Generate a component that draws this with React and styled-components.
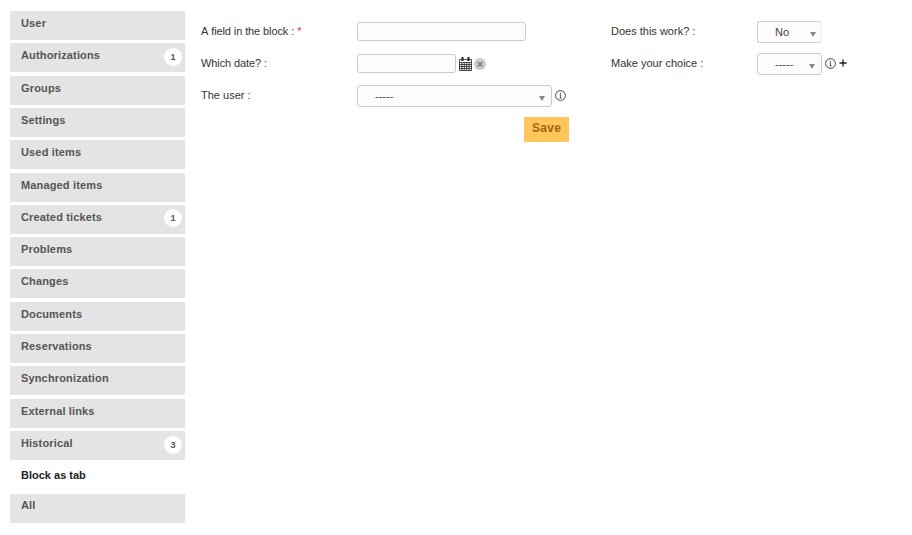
import React from "react";
import styled, { createGlobalStyle } from "styled-components";

const GlobalStyle = createGlobalStyle`
  html, body {
    margin: 0;
    padding: 0;
    background: #fff;
    font-family: "Liberation Sans", Arial, sans-serif;
    font-size: 11px;
    color: #333;
    font-kerning: none;
  }
`;

const Page = styled.div`
  width: 912px;
  height: 535px;
  display: flex;
  overflow: hidden;
`;
const Tabs = styled.ul`
  width: 175px;
  margin: 10.99px 0 0 10px;
  padding: 0;
  list-style: none;
  flex: none;
`;
const Tab = styled.li`
  position: relative;
  height: ${(p) => (p.$active ? "30.64px" : "29px")};
  margin-bottom: ${(p) => (p.$active ? "0" : "3.3125px")};
  padding: ${(p) => (p.$compact ? "5px" : "6px")} 11px 0;
  box-sizing: border-box;
  background: ${(p) => (p.$active ? "#fff" : "#e4e4e4")};
  color: ${(p) => (p.$active ? "#222" : "#555")};
  font-weight: bold;
  font-size: 11px;
  line-height: 13px;
  letter-spacing: ${(p) => (p.$active ? "0" : "0.15px")};
`;
const Badge = styled.span`
  position: absolute;
  top: 4.5px;
  right: 3px;
  width: 18px;
  height: 18px;
  border-radius: 50%;
  background: #fff;
  color: #555;
  font-size: 9px;
  line-height: 18px;
  text-align: center;
  letter-spacing: 0;
`;
const Content = styled.div`
  flex: 1;
  display: flex;
  padding-left: 16px;
`;
const LeftBlock = styled.div`
  width: 368px;
  padding-top: 22px;
`;
const RightBlock = styled.div`
  margin-left: 42px;
  padding-top: 21px;
`;
const Row = styled.div`
  display: flex;
  align-items: flex-start;
  height: ${(p) => p.$height || 32}px;
`;
const Label = styled.label`
  width: ${(p) => p.$width || 156}px;
  margin-top: ${(p) => p.$offset || 3}px;
  flex: none;
  font-size: 11px;
  line-height: 13px;
  color: #333;
  letter-spacing: ${(p) => (p.$tight ? "-0.1px" : "0")};
`;
const Required = styled.span`
  color: #e22;
`;
const TextInput = styled.div`
  width: ${(p) => p.$width}px;
  height: 19px;
  box-sizing: border-box;
  border: 1px solid #ccc;
  border-radius: 3px;
  background: #fcfcfc;
`;
const Select = styled.div`
  position: relative;
  width: ${(p) => p.$width}px;
  height: 22px;
  box-sizing: border-box;
  border: 1px solid #ccc;
  border-right-color: ${(p) => (p.$openEdge ? "#eee" : "#ccc")};
  border-radius: 3px;
  background: #fcfcfc;
  color: #444;
  font-size: 11px;
  line-height: 21px;
  padding-left: 17px;
`;
const Arrow = styled.span`
  position: absolute;
  right: ${(p) => p.$right || 6}px;
  top: 10px;
  width: 0;
  height: 0;
  border-left: 3.5px solid transparent;
  border-right: 3.5px solid transparent;
  border-top: 5px solid #888;
`;
const IconBox = styled.svg`
  flex: none;
  margin-left: ${(p) => p.$gap || 3}px;
  margin-top: ${(p) => p.$top || 0}px;
  display: block;
`;
const Clear = styled.span`
  width: 12px;
  height: 12px;
  margin: 4px 0 0 2px;
  border-radius: 50%;
  background: #ccc;
  color: #777;
  font-size: 11px;
  font-weight: bold;
  line-height: 12px;
  text-align: center;
  flex: none;
`;
const Actions = styled.div`
  display: flex;
  justify-content: flex-end;
`;
const SaveButton = styled.button`
  width: 45px;
  height: 25px;
  padding: 0 0 3px;
  border: none;
  background: #ffc75b;
  color: #a2650f;
  font-family: "Liberation Sans", Arial, sans-serif;
  font-size: 12px;
  font-weight: bold;
  letter-spacing: 0.3px;
`;

const tabs = [
  { name: "User" },
  { name: "Authorizations", badge: 1 },
  { name: "Groups" },
  { name: "Settings" },
  { name: "Used items" },
  { name: "Managed items" },
  { name: "Created tickets", badge: 1 },
  { name: "Problems" },
  { name: "Changes" },
  { name: "Documents" },
  { name: "Reservations" },
  { name: "Synchronization" },
  { name: "External links" },
  { name: "Historical", badge: 3 },
  { name: "Block as tab", active: true },
  { name: "All", compact: true },
];

const InfoIcon = ({ top }) => (
  <IconBox width="11" height="11" viewBox="0 0 11 11" $gap={3} $top={top}>
    <circle cx="5.5" cy="5.5" r="4.9" fill="none" stroke="#333" strokeWidth="0.9" />
    <rect x="5" y="2.6" width="1" height="1" fill="#333" />
    <path d="M4.6 4.7H5.5V7.9M4.5 8H6.6" fill="none" stroke="#333" strokeWidth="0.8" />
  </IconBox>
);

const CalendarIcon = () => (
  <IconBox width="13" height="14" viewBox="0 0 13 14" $gap={3} $top={3}>
    <path
      d="M0.5 2.5H12.5V13.5H0.5ZM0.5 5.5H12.5M0.5 7.5H12.5M0.5 9.5H12.5M0.5 11.5H12.5M2.9 5.5V13.5M5.3 5.5V13.5M7.7 5.5V13.5M10.1 5.5V13.5"
      fill="none"
      stroke="#222"
      strokeWidth="0.8"
    />
    <rect x="2.5" y="0" width="2" height="4" fill="#222" />
    <rect x="8.5" y="0" width="2" height="4" fill="#222" />
  </IconBox>
);

const PlusIcon = () => (
  <IconBox width="8" height="8" viewBox="0 0 8 8" $gap={3} $top={6}>
    <path d="M4 0.5V7.5M0.5 4H7.5" fill="none" stroke="#222" strokeWidth="1.3" />
  </IconBox>
);

const App = () => (
  <Page>
    <GlobalStyle />
    <Tabs>
      {tabs.map((tab) => (
        <Tab key={tab.name} $active={tab.active} $compact={tab.compact}>
          {tab.name}
          {tab.badge && <Badge>{tab.badge}</Badge>}
        </Tab>
      ))}
    </Tabs>
    <Content>
      <LeftBlock>
        <Row $height={32}>
          <Label $tight>
            A field in the block : <Required>*</Required>
          </Label>
          <TextInput $width={169} />
        </Row>
        <Row $height={31}>
          <Label $tight>Which date? :</Label>
          <TextInput $width={99} />
          <CalendarIcon />
          <Clear>×</Clear>
        </Row>
        <Row $height={32}>
          <Label $offset={4}>The user :</Label>
          <Select $width={195}>
            -----
            <Arrow />
          </Select>
          <InfoIcon top={5} />
        </Row>
        <Actions>
          <SaveButton>Save</SaveButton>
        </Actions>
      </LeftBlock>
      <RightBlock>
        <Row $height={32}>
          <Label $width={146} $offset={4}>Does this work? :</Label>
          <Select $width={65} $openEdge>
            No
            <Arrow $right={5} />
          </Select>
        </Row>
        <Row $height={32}>
          <Label $width={146} $offset={4}>Make your choice :</Label>
          <Select $width={65}>
            -----
            <Arrow />
          </Select>
          <InfoIcon top={5} />
          <PlusIcon />
        </Row>
      </RightBlock>
    </Content>
  </Page>
);

export default App;
